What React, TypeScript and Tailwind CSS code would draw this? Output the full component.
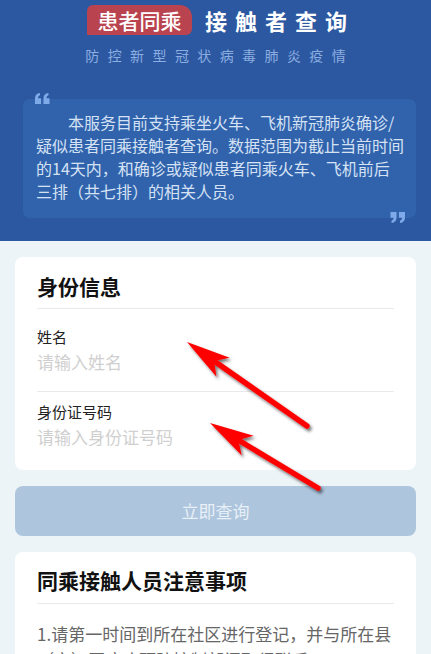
import React from 'react';

const font = { fontFamily: '"Noto Sans CJK SC", "Noto Sans", sans-serif' };

function QuoteMark({ flip = false }: { flip?: boolean }) {
  // one "66" style quote, flipped for the closing "99"
  const glyph = 'M0 11 V5.2 C0 2.2 1.8 0.4 5 0 V2.2 C3.6 2.6 3.1 3.6 3 5.2 H6 V11 Z';
  return (
    <svg width="15" height="11" viewBox="0 0 15 11" style={flip ? { transform: 'rotate(180deg)' } : undefined}>
      <path d={glyph} fill="#7eaaea" />
      <path d={glyph} transform="translate(8.5 0)" fill="#7eaaea" />
    </svg>
  );
}

function Arrow({ tip, tail }: { tip: [number, number]; tail: [number, number] }) {
  const dx = tail[0] - tip[0];
  const dy = tail[1] - tip[1];
  const len = Math.hypot(dx, dy);
  const ux = dx / len;
  const uy = dy / len;
  const nx = -uy;
  const ny = ux;
  const head = 44;
  const half = 11.5;
  const notch = 33;
  const b1 = [tip[0] + head * ux + half * nx, tip[1] + head * uy + half * ny];
  const b2 = [tip[0] + head * ux - half * nx, tip[1] + head * uy - half * ny];
  const nt = [tip[0] + notch * ux, tip[1] + notch * uy];
  return (
    <g filter="url(#arrowShadow)">
      <line x1={nt[0]} y1={nt[1]} x2={tail[0]} y2={tail[1]} stroke="#ff0000" strokeWidth="5.5" strokeLinecap="round" />
      <polygon points={`${tip[0]},${tip[1]} ${b1[0]},${b1[1]} ${nt[0]},${nt[1]} ${b2[0]},${b2[1]}`} fill="#ff0000" />
    </g>
  );
}

export default function App() {
  return (
    <div className="relative w-[431px] h-[654px] overflow-hidden bg-[#edf4f7]" style={font}>
      {/* 顶部蓝色区域 */}
      <div className="h-[241px] bg-[#2b58a0] pt-[5px]">
        <div className="flex items-center justify-center pl-[3px]">
          <div className="h-[30px] w-[105px] bg-[#b94450] rounded-tl-[6px] rounded-tr-[12px] rounded-br-[6px] flex items-center justify-center text-white text-[21px] font-medium leading-[30px]">
            患者同乘
          </div>
          <div className="ml-[13px] -mr-[8px] text-white text-[22px] font-bold tracking-[8px] leading-[30px]">
            接触者查询
          </div>
        </div>
        <div className="mt-[10px] flex justify-center">
          <div className="text-[14px] leading-[20px] tracking-[8.4px] -mr-[8.4px] text-[#8cade0]">
            防控新型冠状病毒肺炎疫情
          </div>
        </div>

        <div className="relative mt-[34px] ml-[23px] mr-[15px] h-[119px] rounded-[7px] bg-[#3163ad] pl-[13px] pr-[8px] pt-[12px]">
          <div className="absolute left-[12px] top-[-6px]">
            <QuoteMark />
          </div>
          <p className="text-[16px] leading-[23px] text-[#d5e2f4] whitespace-nowrap">
            <span className="pl-[32px]">本服务目前支持乘坐火车、飞机新冠肺炎确诊/</span>
            <br />
            疑似患者同乘接触者查询。数据范围为截止当前时间
            <br />
            的14天内，和确诊或疑似患者同乘火车、飞机前后
            <br />
            三排（共七排）的相关人员。
          </p>
          <div className="absolute right-[11px] bottom-[-5px]">
            <QuoteMark flip />
          </div>
        </div>
      </div>

      {/* 身份信息 */}
      <div className="mx-[15px] mt-[16px] rounded-[8px] bg-white px-[22px]">
        <div className="pt-[15px] pb-[8px] border-b border-[#e9e9e9] text-[21px] leading-[28px] font-bold text-[#111]">
          身份信息
        </div>
        <div className="pt-[18px] pb-[17px] border-b border-[#e9e9e9]">
          <div className="text-[15px] leading-[20px] text-[#222]">姓名</div>
          <div className="mt-[3px] text-[17px] leading-[24px] text-[#cfcfcf]">请输入姓名</div>
        </div>
        <div className="pt-[10px] pb-[21px]">
          <div className="text-[15px] leading-[20px] text-[#222]">身份证号码</div>
          <div className="mt-[3px] text-[17px] leading-[24px] text-[#cfcfcf]">请输入身份证号码</div>
        </div>
      </div>

      <button className="mx-[15px] mt-[16px] h-[50px] w-[401px] rounded-[8px] bg-[#adc5dd] text-[17px] text-[#e9f0f7]">
        立即查询
      </button>

      {/* 注意事项 */}
      <div className="mx-[15px] mt-[16px] rounded-[8px] bg-white px-[22px]">
        <div className="pt-[14px] pb-[9px] border-b border-[#e9e9e9] text-[21px] leading-[28px] font-bold text-[#111]">
          同乘接触人员注意事项
        </div>
        <p className="pt-[17px] pb-[20px] text-[17px] leading-[26px] text-[#666]">
          1.请第一时间到所在社区进行登记，并与所在县（市）区疾病预防控制部门取得联系。
        </p>
      </div>

      {/* 红色箭头标注 */}
      <svg className="pointer-events-none absolute left-0 top-0" width="431" height="654">
        <defs>
          <filter id="arrowShadow" x="-20%" y="-20%" width="140%" height="140%">
            <feDropShadow dx="2" dy="2.5" stdDeviation="1.6" floodColor="#000" floodOpacity="0.55" />
          </filter>
        </defs>
        <Arrow tip={[187, 342]} tail={[307, 426]} />
        <Arrow tip={[210, 423]} tail={[318, 488]} />
      </svg>
    </div>
  );
}
